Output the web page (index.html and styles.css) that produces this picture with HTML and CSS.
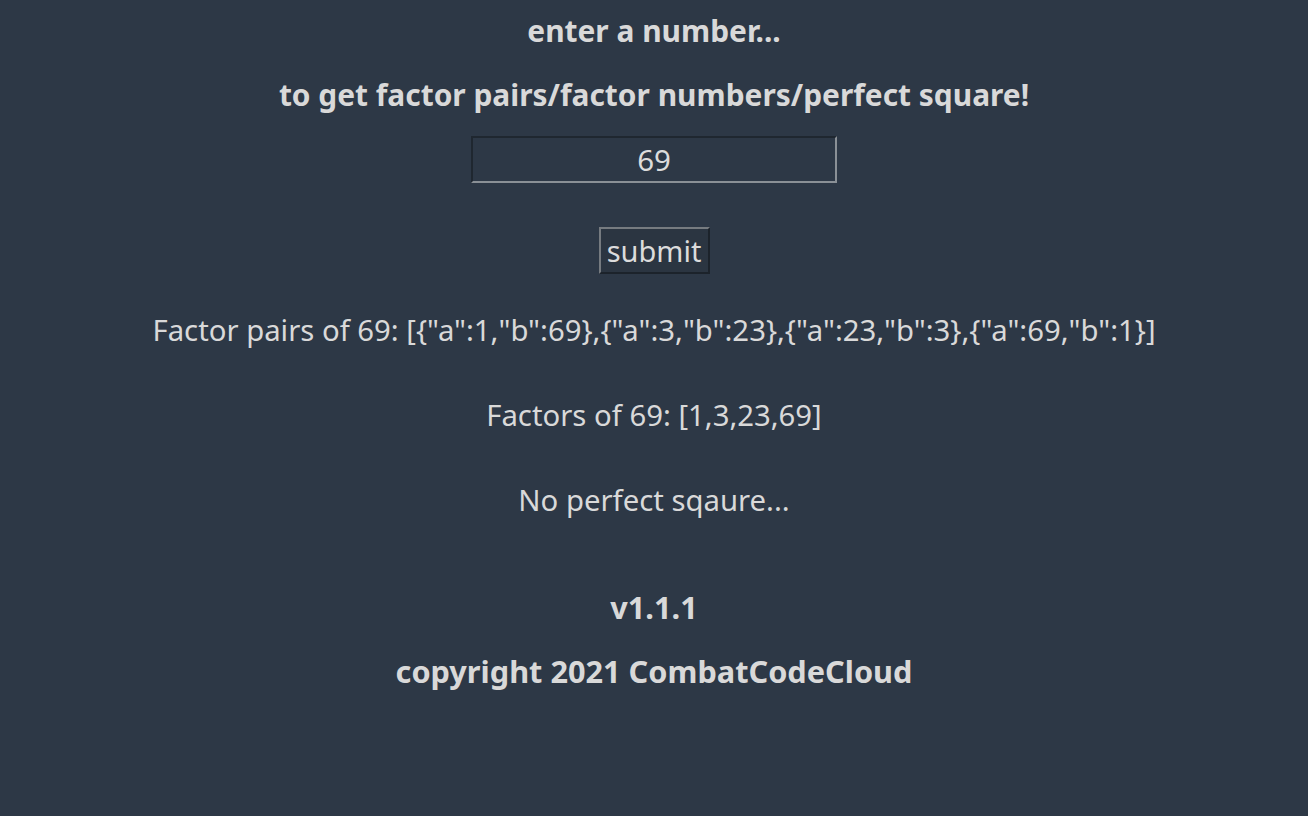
FILE: index.html
```html
<!DOCTYPE html>
<html lang="en">
<head>
<meta charset="utf-8">
<title>Factor finder</title>
<link rel="stylesheet" href="styles.css">
</head>
<body>
<main class="app">
  <h3 class="heading first">enter a number...</h3>
  <h3 class="heading second">to get factor pairs/factor numbers/perfect square!</h3>
  <input class="num-input" type="text" value="69">
  <button class="submit-btn" type="button">submit</button>
  <p class="result pairs">Factor pairs of 69: [{"a":1,"b":69},{"a":3,"b":23},{"a":23,"b":3},{"a":69,"b":1}]</p>
  <p class="result factors">Factors of 69: [1,3,23,69]</p>
  <p class="result square">No perfect sqaure...</p>
  <h3 class="heading foot version">v1.1.1</h3>
  <h3 class="heading foot copyright">copyright 2021 CombatCodeCloud</h3>
</main>
</body>
</html>
```
FILE: styles.css
```css
html, body {
  margin: 0;
  padding: 0;
  background: #2d3846;
  height: 100%;
}
body {
  font-family: "Noto Sans", "Open Sans", sans-serif;
  color: #d9d9d9;
}
.app {
  display: flex;
  flex-direction: column;
  align-items: center;
}
.heading {
  margin: 0;
  font-size: 29.9px;
  font-weight: 700;
  line-height: 40px;
  height: 40px;
  white-space: nowrap;
}
.heading.foot { font-size: 30.7px; }
.first { margin-top: 11px; }
.second { margin-top: 24px; }
.num-input {
  margin-top: 21px;
  box-sizing: border-box;
  width: 366px;
  height: 47px;
  background: #2d3846;
  color: #dcdcdc;
  font-family: inherit;
  font-size: 29.5px;
  text-align: center;
  border: 2px solid;
  border-color: #1f2730 #8a9096 #8a9096 #1f2730;
  padding: 0;
  outline: none;
}
.submit-btn {
  margin-top: 44px;
  box-sizing: border-box;
  width: 111px;
  height: 47px;
  background: #2b3541;
  color: #dcdcdc;
  font-family: inherit;
  font-size: 29px;
  border: 2px solid;
  border-color: #767b80 #1c232b #1c232b #767b80;
  padding: 0;
  line-height: 43px;
}
.result {
  margin: 0;
  font-size: 29.3px;
  line-height: 40px;
  height: 40px;
  white-space: nowrap;
}
.pairs { margin-top: 36px; }
.factors { margin-top: 45px; }
.square { margin-top: 45px; }
.version { margin-top: 67px; }
.copyright { margin-top: 24px; }
```
